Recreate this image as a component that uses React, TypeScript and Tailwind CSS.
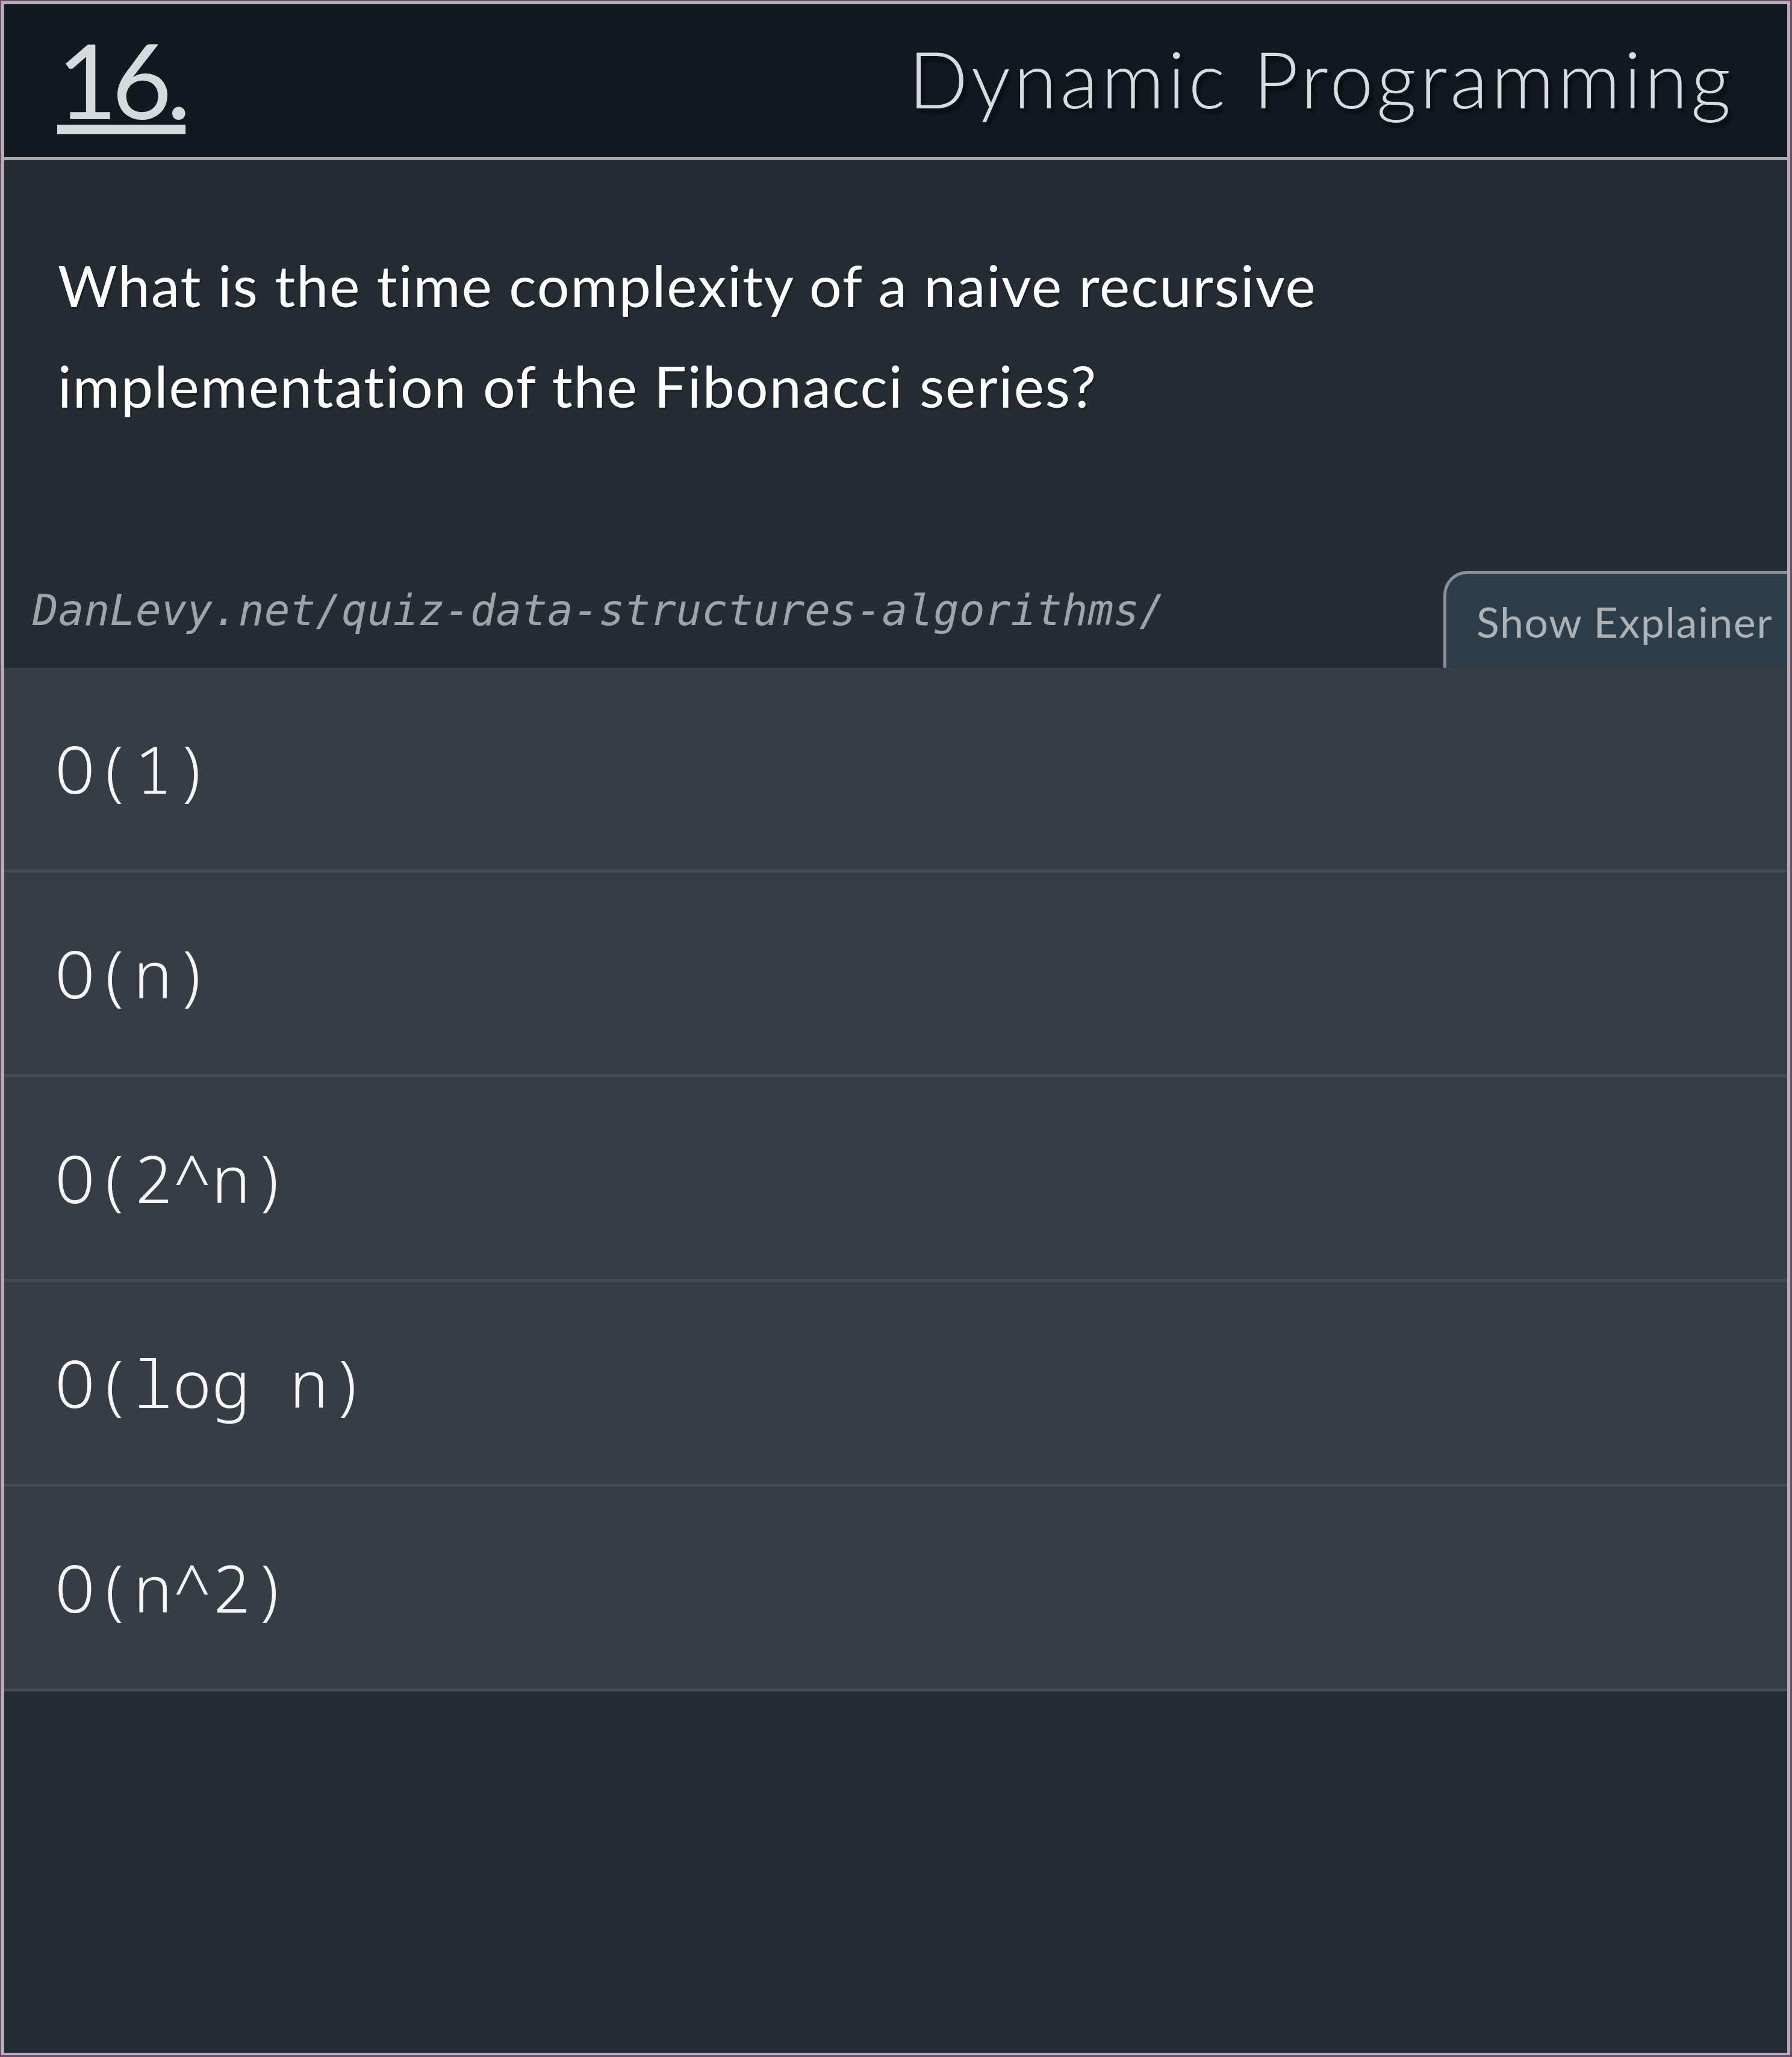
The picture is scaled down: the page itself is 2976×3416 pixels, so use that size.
import React from "react";

const options = ["O(1)", "O(n)", "O(2^n)", "O(log n)", "O(n^2)"];

export default function App() {
  return (
    <div className="w-[2976px] h-[3416px] border-t-2 border-l-2 border-r-[3px] border-b-[3px] border-[#74496f] bg-[#74496f]">
      <div className="h-full flex flex-col border-t-[5px] border-l-[5px] border-r-[5px] border-b-[4px] border-[#b1b1b3] bg-[#262c33]">
        <header className="h-[259px] shrink-0 bg-[#121920] border-b-[5px] border-[#a9a9ab] flex items-center justify-between pl-[88px] pr-[88px]">
          <span
            className="text-[172px] leading-none tracking-[-9px] text-[#d7dadd] underline decoration-[16px] underline-offset-[9px] mt-[-4px] [font-variant-numeric:lining-nums]"
            style={{ fontFamily: 'Lato, "Liberation Sans", sans-serif' }}
          >
            16.
          </span>
          <span
            className="text-[130px] leading-none tracking-[5.5px] text-[#d8dbde] font-light mb-[8px] [text-shadow:5px_8px_6px_rgba(0,0,0,0.55)]"
            style={{ fontFamily: 'Lato, "Open Sans", sans-serif' }}
          >
            Dynamic Programming
          </span>
        </header>

        <section className="shrink-0 h-[682px] pt-[124px] pl-[89px]">
          <p
            className="text-[95px] leading-[167px] tracking-[2px] text-white max-w-[2400px] [font-variant-ligatures:none] [text-shadow:2px_3px_3px_rgba(0,0,0,0.35)]"
            style={{ fontFamily: 'Lato, "Open Sans", sans-serif' }}
          >
            What is the time complexity of a naive recursive
            <br />
            implementation of the Fibonacci series?
          </p>
        </section>

        <div className="shrink-0 h-[161px] flex items-start justify-between">
          <span
            className="pl-[47px] pt-[30px] text-[71px] leading-none italic text-[#a0a4a9]"
            style={{ fontFamily: '"DejaVu Sans Mono", monospace' }}
          >
            DanLevy.net/quiz-data-structures-algorithms/
          </span>
          <button
            className="h-[161px] w-[571px] shrink-0 border-t-[5px] border-l-[5px] border-[#899097] rounded-tl-[40px] bg-[#2e3d4a] pl-[50px] pt-[2px] text-left text-[70px] leading-none tracking-[1.5px] text-[#adb2b7] [font-variant-ligatures:none]"
            style={{ fontFamily: 'Lato, "Open Sans", sans-serif' }}
          >
            Show Explainer
          </button>
        </div>

        <ul className="shrink-0">
          {options.map((o) => (
            <li
              key={o}
              className="h-[340px] bg-[#373d45] border-b-[5px] border-[#454b52] flex items-center pl-[85px]"
            >
              <span
                className="text-[108px] leading-none font-light text-[#f6f6f6]"
                style={{ fontFamily: '"Noto Sans Mono", "DejaVu Sans Mono", monospace' }}
              >
                {o}
              </span>
            </li>
          ))}
        </ul>

        <div className="flex-1 bg-[#262c33]" />
      </div>
    </div>
  );
}
